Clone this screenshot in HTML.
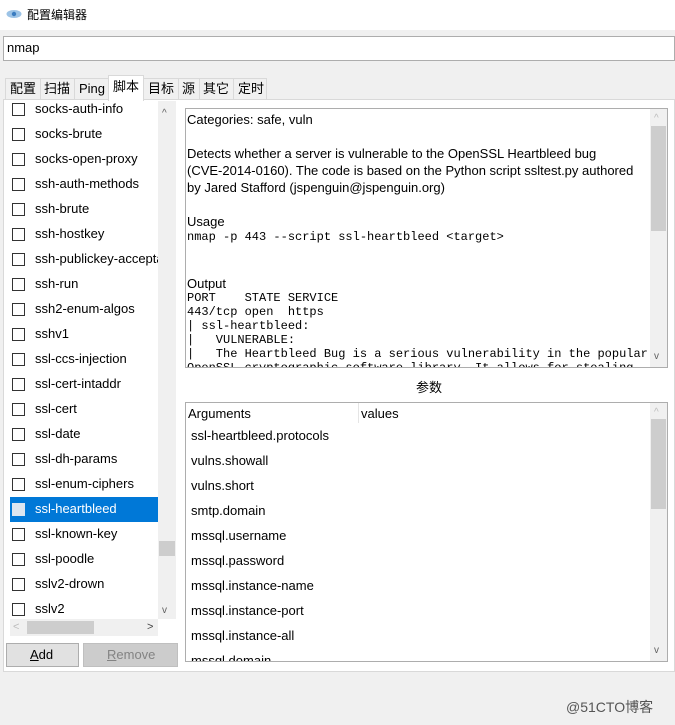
<!DOCTYPE html>
<html><head><meta charset="utf-8"><style>
*{margin:0;padding:0;box-sizing:border-box}
body{width:675px;height:725px;background:#f0f0f0;font-family:"Liberation Sans","Noto Sans CJK SC",sans-serif;font-size:13px;line-height:16px;color:#000;position:relative;overflow:hidden}
.a{position:absolute}
.t{white-space:pre}
.mono{font-family:"Liberation Mono","Noto Sans CJK SC",monospace;font-size:12px;line-height:14px}
.sb{position:absolute;background:#f0f0f0}
.th{position:absolute;background:#cdcdcd}
.cb{position:absolute;left:4px;width:13px;height:13px;border:1px solid #333;background:#fff}
.it{position:absolute;left:27px;white-space:nowrap}
</style></head><body>
<div class="a" style="left:0;top:0;width:675px;height:30px;background:#fff"></div>
<svg class="a" style="left:6px;top:9px" width="16" height="10"><ellipse cx="8" cy="5" rx="7.5" ry="4" fill="#9cc3e6"/><circle cx="8" cy="5" r="2.2" fill="#3a7cc0"/></svg>
<div class="a t" style="left:27px;top:7px;font-size:12px">配置编辑器</div>
<div class="a" style="left:3px;top:36px;width:672px;height:25px;background:#fff;border:1px solid #adadad"></div>
<div class="a t" style="left:7px;top:40px">nmap</div>
<!-- tabs -->
<div class="a" style="left:3px;top:99px;width:672px;height:573px;background:#fff;border:1px solid #d9d9d9"></div>
<div class="a" style="left:5px;top:78px;width:262px;height:21px;background:#f0f0f0;border:1px solid #d9d9d9;border-bottom:none"></div>
<div class="a" style="left:108px;top:75px;width:36px;height:26px;background:#fff;border:1px solid #d9d9d9;border-bottom:none"></div>
<div class="a t" style="left:10px;top:81px">配置</div>
<div class="a t" style="left:44px;top:81px">扫描</div>
<div class="a t" style="left:79px;top:81px">Ping</div>
<div class="a t" style="left:113px;top:79px">脚本</div>
<div class="a t" style="left:148px;top:81px">目标</div>
<div class="a t" style="left:182px;top:81px">源</div>
<div class="a t" style="left:203px;top:81px">其它</div>
<div class="a t" style="left:238px;top:81px">定时</div>
<div class="a" style="left:40px;top:79px;width:1px;height:20px;background:#d9d9d9"></div>
<div class="a" style="left:74px;top:79px;width:1px;height:20px;background:#d9d9d9"></div>
<div class="a" style="left:178px;top:79px;width:1px;height:20px;background:#d9d9d9"></div>
<div class="a" style="left:199px;top:79px;width:1px;height:20px;background:#d9d9d9"></div>
<div class="a" style="left:233px;top:79px;width:1px;height:20px;background:#d9d9d9"></div>
<!-- left list -->
<div class="a" style="left:8px;top:101px;width:168px;height:535px;overflow:hidden;background:#fff">
<div class="a" style="left:2px;top:396px;width:148px;height:25px;background:#0078d7"></div>
<div class="cb" style="top:2px"></div><div class="it" style="top:0px">socks-auth-info</div>
<div class="cb" style="top:27px"></div><div class="it" style="top:25px">socks-brute</div>
<div class="cb" style="top:52px"></div><div class="it" style="top:50px">socks-open-proxy</div>
<div class="cb" style="top:77px"></div><div class="it" style="top:75px">ssh-auth-methods</div>
<div class="cb" style="top:102px"></div><div class="it" style="top:100px">ssh-brute</div>
<div class="cb" style="top:127px"></div><div class="it" style="top:125px">ssh-hostkey</div>
<div class="cb" style="top:152px"></div><div class="it" style="top:150px">ssh-publickey-acceptance</div>
<div class="cb" style="top:177px"></div><div class="it" style="top:175px">ssh-run</div>
<div class="cb" style="top:202px"></div><div class="it" style="top:200px">ssh2-enum-algos</div>
<div class="cb" style="top:227px"></div><div class="it" style="top:225px">sshv1</div>
<div class="cb" style="top:252px"></div><div class="it" style="top:250px">ssl-ccs-injection</div>
<div class="cb" style="top:277px"></div><div class="it" style="top:275px">ssl-cert-intaddr</div>
<div class="cb" style="top:302px"></div><div class="it" style="top:300px">ssl-cert</div>
<div class="cb" style="top:327px"></div><div class="it" style="top:325px">ssl-date</div>
<div class="cb" style="top:352px"></div><div class="it" style="top:350px">ssl-dh-params</div>
<div class="cb" style="top:377px"></div><div class="it" style="top:375px">ssl-enum-ciphers</div>
<div class="cb" style="top:402px;background:#dce6f0;border-color:#dce6f0"></div><div class="it" style="top:400px;color:#fff">ssl-heartbleed</div>
<div class="cb" style="top:427px"></div><div class="it" style="top:425px">ssl-known-key</div>
<div class="cb" style="top:452px"></div><div class="it" style="top:450px">ssl-poodle</div>
<div class="cb" style="top:477px"></div><div class="it" style="top:475px">sslv2-drown</div>
<div class="cb" style="top:502px"></div><div class="it" style="top:500px">sslv2</div>
<div class="sb" style="left:150px;top:0;width:18px;height:518px"></div>
<div class="th" style="left:151px;top:440px;width:16px;height:15px"></div>
<div class="a t" style="left:154px;top:5px;font-size:10px;color:#606060">^</div>
<div class="a t" style="left:154px;top:502px;font-size:10px;color:#606060">v</div>
<div class="sb" style="left:2px;top:518px;width:148px;height:17px"></div>
<div class="th" style="left:19px;top:520px;width:67px;height:13px"></div>
<div class="a t" style="left:5px;top:518px;font-size:11px;color:#bbb">&lt;</div>
<div class="a t" style="left:139px;top:518px;font-size:11px;color:#444">&gt;</div>
</div>
<!-- buttons -->
<div class="a" style="left:6px;top:643px;width:73px;height:24px;background:#e1e1e1;border:1px solid #adadad"></div>
<div class="a t" style="left:30px;top:647px"><u>A</u>dd</div>
<div class="a" style="left:83px;top:643px;width:95px;height:24px;background:#cccccc;border:1px solid #bfbfbf"></div>
<div class="a t" style="left:107px;top:647px;color:#838383"><u>R</u>emove</div>
<!-- textbox -->
<div class="a" style="left:185px;top:108px;width:483px;height:260px;background:#fff;border:1px solid #adadad;overflow:hidden">
<div class="a t" style="left:1px;top:3px">Categories: safe, vuln</div>
<div class="a t" style="left:1px;top:37px">Detects whether a server is vulnerable to the OpenSSL Heartbleed bug</div>
<div class="a t" style="left:1px;top:54px">(CVE-2014-0160). The code is based on the Python script ssltest.py authored</div>
<div class="a t" style="left:1px;top:71px">by Jared Stafford (jspenguin@jspenguin.org)</div>
<div class="a t" style="left:1px;top:105px">Usage</div>
<div class="a t mono" style="left:1px;top:121px">nmap -p 443 --script ssl-heartbleed &lt;target&gt;</div>
<div class="a t" style="left:1px;top:167px">Output</div>
<div class="a t mono" style="left:1px;top:182px">PORT    STATE SERVICE</div>
<div class="a t mono" style="left:1px;top:196px">443/tcp open  https</div>
<div class="a t mono" style="left:1px;top:210px">| ssl-heartbleed:</div>
<div class="a t mono" style="left:1px;top:224px">|   VULNERABLE:</div>
<div class="a t mono" style="left:1px;top:238px">|   The Heartbleed Bug is a serious vulnerability in the popular</div>
<div class="a t mono" style="left:1px;top:252px">OpenSSL cryptographic software library. It allows for stealing</div>
<div class="sb" style="left:464px;top:0;width:17px;height:258px"></div>
<div class="th" style="left:465px;top:17px;width:15px;height:105px"></div>
<div class="a t" style="left:468px;top:2px;font-size:10px;color:#bbb">^</div>
<div class="a t" style="left:468px;top:240px;font-size:10px;color:#606060">v</div>
</div>
<div class="a t" style="left:416px;top:380px">参数</div>
<!-- table -->
<div class="a" style="left:185px;top:402px;width:483px;height:260px;background:#fff;border:1px solid #adadad;overflow:hidden">
<div class="a" style="left:172px;top:0;width:1px;height:20px;background:#e5e5e5"></div>
<div class="a t" style="left:2px;top:3px">Arguments</div>
<div class="a t" style="left:175px;top:3px">values</div>
<div class="a t" style="left:5px;top:25px">ssl-heartbleed.protocols</div>
<div class="a t" style="left:5px;top:50px">vulns.showall</div>
<div class="a t" style="left:5px;top:75px">vulns.short</div>
<div class="a t" style="left:5px;top:100px">smtp.domain</div>
<div class="a t" style="left:5px;top:125px">mssql.username</div>
<div class="a t" style="left:5px;top:150px">mssql.password</div>
<div class="a t" style="left:5px;top:175px">mssql.instance-name</div>
<div class="a t" style="left:5px;top:200px">mssql.instance-port</div>
<div class="a t" style="left:5px;top:225px">mssql.instance-all</div>
<div class="a t" style="left:5px;top:250px">mssql.domain</div>
<div class="sb" style="left:464px;top:0;width:17px;height:258px"></div>
<div class="th" style="left:465px;top:16px;width:15px;height:90px"></div>
<div class="a t" style="left:468px;top:2px;font-size:10px;color:#bbb">^</div>
<div class="a t" style="left:468px;top:240px;font-size:10px;color:#606060">v</div>
</div>
<div class="a t" style="left:566px;top:699px;font-size:14px;color:#555">@51CTO博客</div>
</body></html>
